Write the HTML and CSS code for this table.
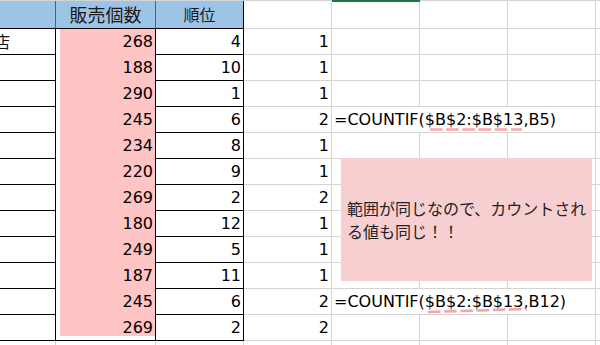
FILE: index.html
```html
<!DOCTYPE html>
<html lang="ja">
<head>
<meta charset="utf-8">
<title>COUNTIF</title>
<link rel="stylesheet" href="styles.css">
</head>
<body>
<div class="page">
  <div class="sheet">
    <div class="c hd ha"></div><div class="c hd hb">販売個数</div><div class="c hd hc">順位</div><div class="c"></div><div class="c"></div><div class="c"></div><div class="c"></div><div class="c end"></div>

    <div class="c ta"><span class="cut">店</span></div><div class="c tb num">268</div><div class="c tc num">4</div><div class="c num">1</div><div class="c"></div><div class="c"></div><div class="c"></div><div class="c end"></div>
    <div class="c ta"></div><div class="c tb num">188</div><div class="c tc num">10</div><div class="c num">1</div><div class="c"></div><div class="c"></div><div class="c"></div><div class="c end"></div>
    <div class="c ta"></div><div class="c tb num">290</div><div class="c tc num">1</div><div class="c num">1</div><div class="c"></div><div class="c"></div><div class="c"></div><div class="c end"></div>
    <div class="c ta"></div><div class="c tb num">245</div><div class="c tc num">6</div><div class="c num">2</div><div class="c fx">=COUNTIF($B$2:$B$13,B5)</div><div class="c end"></div>
    <div class="c ta"></div><div class="c tb num">234</div><div class="c tc num">8</div><div class="c num">1</div><div class="c"></div><div class="c"></div><div class="c"></div><div class="c end"></div>
    <div class="c ta"></div><div class="c tb num">220</div><div class="c tc num">9</div><div class="c num">1</div><div class="c"></div><div class="c"></div><div class="c"></div><div class="c end"></div>
    <div class="c ta"></div><div class="c tb num">269</div><div class="c tc num">2</div><div class="c num">2</div><div class="c"></div><div class="c"></div><div class="c"></div><div class="c end"></div>
    <div class="c ta"></div><div class="c tb num">180</div><div class="c tc num">12</div><div class="c num">1</div><div class="c"></div><div class="c"></div><div class="c"></div><div class="c end"></div>
    <div class="c ta"></div><div class="c tb num">249</div><div class="c tc num">5</div><div class="c num">1</div><div class="c"></div><div class="c"></div><div class="c"></div><div class="c end"></div>
    <div class="c ta"></div><div class="c tb num">187</div><div class="c tc num">11</div><div class="c num">1</div><div class="c"></div><div class="c"></div><div class="c"></div><div class="c end"></div>
    <div class="c ta"></div><div class="c tb num">245</div><div class="c tc num">6</div><div class="c num">2</div><div class="c fx">=COUNTIF($B$2:$B$13,B12)</div><div class="c end"></div>
    <div class="c ta"></div><div class="c tb num last">269</div><div class="c tc num">2</div><div class="c num">2</div><div class="c"></div><div class="c"></div><div class="c"></div><div class="c end"></div>

    <div class="c"></div><div class="c"></div><div class="c"></div><div class="c"></div><div class="c"></div><div class="c"></div><div class="c"></div><div class="c end"></div>
  </div>

  <div class="note">
    <p class="note-text">範囲が同じなので、カウントされる値も同じ！！</p>
  </div>

  <svg class="marks" width="600" height="345" viewBox="0 0 600 345" aria-hidden="true">
    <rect x="332" y="0" width="88" height="2" fill="#217346"/>
    <line x1="430" y1="129.5" x2="522" y2="129.5" stroke="#f3a6ac" stroke-width="2.6" stroke-dasharray="12.5 3.7"/>
    <line x1="428" y1="312" x2="527" y2="309" stroke="#f3a6ac" stroke-width="2.6" stroke-dasharray="12.5 3.7"/>
  </svg>
</div>
</body>
</html>
```

FILE: styles.css
```css
* {
  box-sizing: border-box;
}

html,
body {
  margin: 0;
  padding: 0;
  background: #ffffff;
  overflow: hidden;
}

body {
  width: 600px;
  height: 345px;
  font-family: "DejaVu Sans", "Noto Sans CJK JP", sans-serif;
  font-size: 16px;
  color: #000000;
}

.page {
  position: relative;
  width: 600px;
  height: 345px;
  overflow: hidden;
}

.sheet {
  display: grid;
  grid-template-columns: 56px 100px 88px 88px 88px 88px 88px 4px;
  grid-template-rows: 28px repeat(13, 26px);
  border-top: 1px solid #d4d4d4;
}

.c {
  border-right: 1px solid #d4d4d4;
  border-bottom: 1px solid #d4d4d4;
  line-height: 25px;
  white-space: nowrap;
  overflow: hidden;
}

.end {
  border-right: none;
}

.hd {
  background: #9dc3e6;
  border-bottom-color: #000000;
  border-right-color: #55606c;
  line-height: 27px;
  text-align: center;
  font-family: "Noto Sans CJK JP", sans-serif;
  color: #1a1a1a;
}

.hb {
  font-size: 18px;
}

.hc {
  border-right-color: #000000;
}

.ta {
  border-right-color: #000000;
  border-bottom-color: #000000;
}

.cut {
  display: inline-block;
  margin-left: -6px;
  font-family: "Noto Sans CJK JP", sans-serif;
  color: #111111;
}

.tb {
  border-right-color: #000000;
  border-bottom: none;
  background: linear-gradient(to right, #ffffff 4px, #ffc4c4 4px);
}

.tb.last {
  border-bottom: 1px solid #000000;
  box-shadow: inset 0 -4px 0 #ffffff;
}

.tc {
  border-right-color: #000000;
  border-bottom-color: #000000;
}

.num {
  text-align: right;
  padding-right: 2px;
}

.fx {
  grid-column: span 3;
  padding-left: 2px;
  overflow: visible;
}

.note {
  position: absolute;
  left: 341px;
  top: 158px;
  width: 251px;
  height: 123px;
  background: #f8cfd1;
  display: flex;
  align-items: center;
  padding: 0 3px 0 6px;
}

.note-text {
  margin: 0;
  font-family: "Noto Sans CJK JP", sans-serif;
  font-size: 16px;
  line-height: 23px;
  color: #222222;
}

.marks {
  position: absolute;
  left: 0;
  top: 0;
  pointer-events: none;
}
```
